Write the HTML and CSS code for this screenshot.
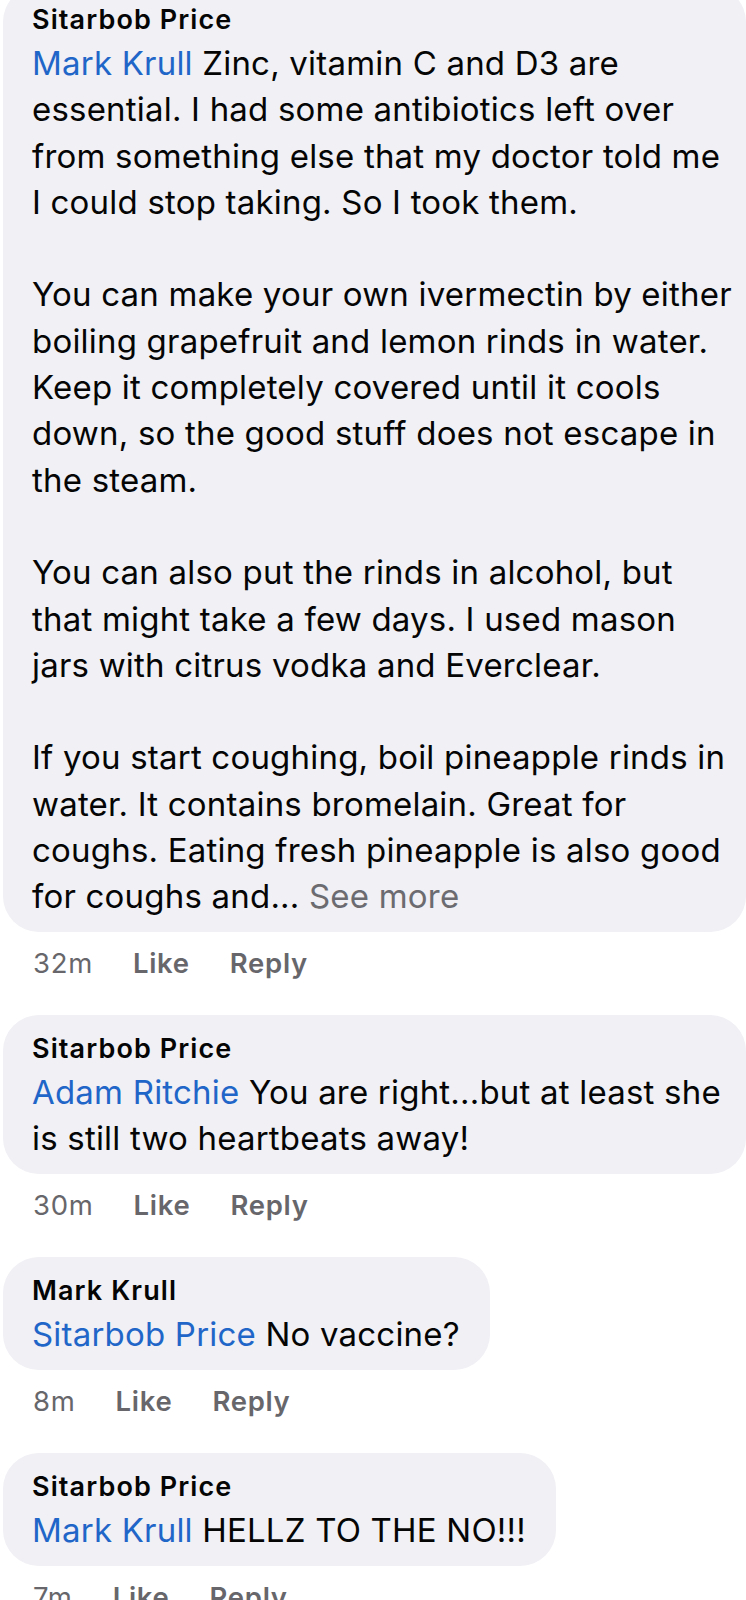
FILE: index.html
```html
<!DOCTYPE html>
<html lang="en">
<head>
<meta charset="utf-8">
<title>Comments</title>
<link rel="stylesheet" href="styles.css">
</head>
<body>
<div class="thread">
  <div class="comment">
    <div class="bubble bubble--full">
      <div class="author">Sitarbob Price</div>
      <div class="text"><span class="mention">Mark Krull</span> Zinc, vitamin C and D3 are<br>essential. I had some antibiotics left over<br>from something else that my doctor told me<br>I could stop taking. So I took them.<br><br>You can make your own ivermectin by either<br>boiling grapefruit and lemon rinds in water.<br>Keep it completely covered until it cools<br>down, so the good stuff does not escape in<br>the steam.<br><br>You can also put the rinds in alcohol, but<br>that might take a few days. I used mason<br>jars with citrus vodka and Everclear.<br><br>If you start coughing, boil pineapple rinds in<br>water. It contains bromelain. Great for<br>coughs. Eating fresh pineapple is also good<br>for coughs and... <span class="more">See more</span></div>
    </div>
    <div class="meta"><span class="time">32m</span><span class="action">Like</span><span class="action">Reply</span></div>
  </div>

  <div class="comment">
    <div class="bubble bubble--full">
      <div class="author">Sitarbob Price</div>
      <div class="text"><span class="mention">Adam Ritchie</span> You are right...but at least she<br>is still two heartbeats away!</div>
    </div>
    <div class="meta"><span class="time">30m</span><span class="action">Like</span><span class="action">Reply</span></div>
  </div>

  <div class="comment">
    <div class="bubble">
      <div class="author">Mark Krull</div>
      <div class="text"><span class="mention">Sitarbob Price</span> No vaccine?</div>
    </div>
    <div class="meta"><span class="time">8m</span><span class="action">Like</span><span class="action">Reply</span></div>
  </div>

  <div class="comment">
    <div class="bubble">
      <div class="author">Sitarbob Price</div>
      <div class="text"><span class="mention">Mark Krull</span> HELLZ TO THE NO!!!</div>
    </div>
    <div class="meta"><span class="time">7m</span><span class="action">Like</span><span class="action">Reply</span></div>
  </div>
</div>
</body>
</html>
```

FILE: styles.css
```css
html, body {
  margin: 0;
  padding: 0;
  background: #ffffff;
}

body {
  font-family: Inter, "Noto Sans", "Liberation Sans", sans-serif;
  color: #050505;
  overflow: hidden;
}

.thread {
  margin-top: -14px;
  padding-left: 3px;
  display: flex;
  flex-direction: column;
  align-items: flex-start;
}

.comment {
  display: flex;
  flex-direction: column;
  align-items: flex-start;
  align-self: stretch;
}

.bubble {
  background: #f0f0f5;
  border-radius: 36px;
  padding: 14px 30px 12.5px 29px;
  white-space: nowrap;
}

.bubble--full {
  align-self: stretch;
}

.author {
  font-size: 27px;
  font-weight: 600;
  line-height: 40px;
  letter-spacing: 1.1px;
}

.text {
  font-size: 33px;
  line-height: 46.3px;
  letter-spacing: 0.2px;
}

.mention {
  color: #1f66c8;
}

.more {
  color: #6b6b70;
}

.meta {
  display: flex;
  gap: 40px;
  margin: 13px 0 34px 30px;
  font-size: 27.5px;
  line-height: 36px;
  letter-spacing: 0.7px;
  color: #67676b;
}

.action {
  font-weight: 600;
}
```
